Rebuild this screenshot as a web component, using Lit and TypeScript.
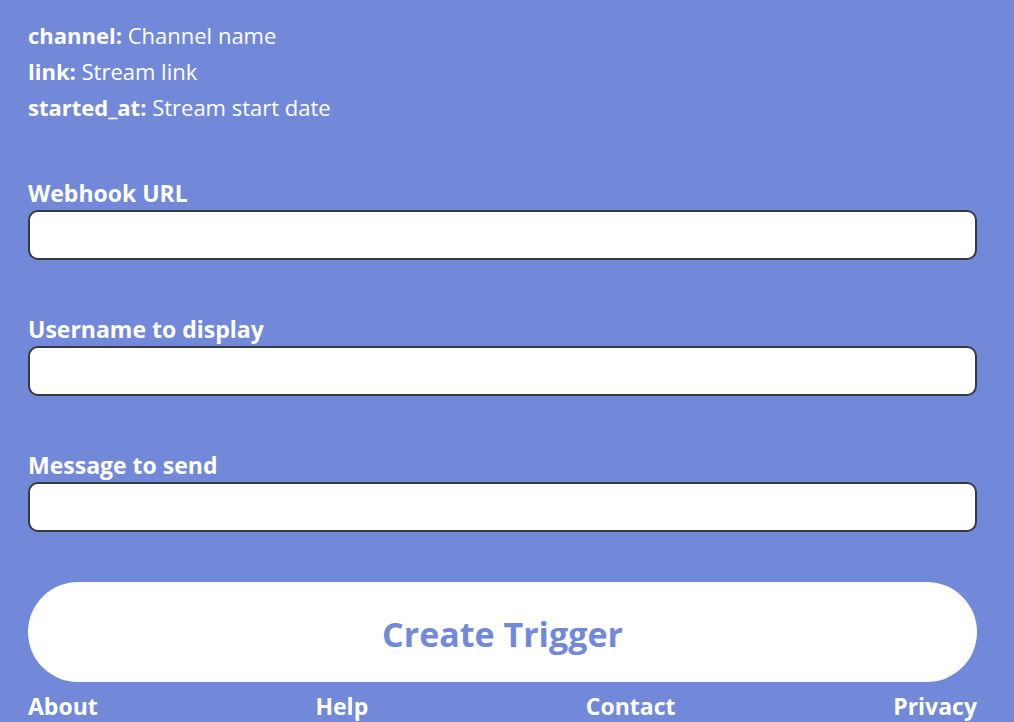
import { LitElement, html, css } from "lit";
import { customElement } from "lit/decorators.js";

const variables = [
  { name: "channel", text: "Channel name" },
  { name: "link", text: "Stream link" },
  { name: "started_at", text: "Stream start date" },
];

const fields = [
  { id: "webhook", label: "Webhook URL" },
  { id: "username", label: "Username to display" },
  { id: "message", label: "Message to send" },
];

const links = ["About", "Help", "Contact", "Privacy"];

@customElement("app-root")
export class AppRoot extends LitElement {
  static styles = css`
    :host {
      display: block;
      box-sizing: border-box;
      min-height: 100vh;
      padding: 17px 37px 0 28px;
      background: #7289da;
      color: #fff;
      font-family: "Open Sans", "Noto Sans", sans-serif;
      font-size: 22px;
      line-height: 36px;
    }
    .variables {
      margin: 0;
      padding: 0;
      list-style: none;
    }
    .form {
      display: flex;
      flex-direction: column;
      gap: 52px;
      margin-top: 51px;
    }
    .field {
      display: flex;
      flex-direction: column;
    }
    .label {
      font-size: 23px;
      font-weight: 700;
      line-height: 34px;
    }
    .input {
      box-sizing: border-box;
      width: 100%;
      height: 50px;
      padding: 0 12px;
      border: 2px solid #36393f;
      border-radius: 10px;
      background: #fff;
      color: #36393f;
      font: inherit;
    }
    .submit {
      height: 100px;
      margin-top: -2px;
      padding: 4px 0 0;
      border: 0;
      border-radius: 50px;
      background: #fff;
      color: #7289da;
      font: inherit;
      font-size: 34px;
      font-weight: 700;
      cursor: pointer;
    }
    .footer {
      display: flex;
      justify-content: space-between;
      padding-top: 8px;
      line-height: 32px;
    }
    .link {
      color: inherit;
      font-size: 23px;
      font-weight: 700;
      text-decoration: none;
    }
  `;

  render() {
    return html`
      <ul class="variables">
        ${variables.map((v) => html`<li><b>${v.name}:</b> ${v.text}</li>`)}
      </ul>
      <form class="form" @submit=${(e: Event) => e.preventDefault()}>
        ${fields.map(
          (f) => html`<div class="field">
            <label class="label" for=${f.id}>${f.label}</label>
            <input class="input" type="text" id=${f.id} name=${f.id} />
          </div>`
        )}
        <button class="submit" type="submit">Create Trigger</button>
      </form>
      <nav class="footer">
        ${links.map((l) => html`<a class="link" href="#${l.toLowerCase()}">${l}</a>`)}
      </nav>
    `;
  }
}
